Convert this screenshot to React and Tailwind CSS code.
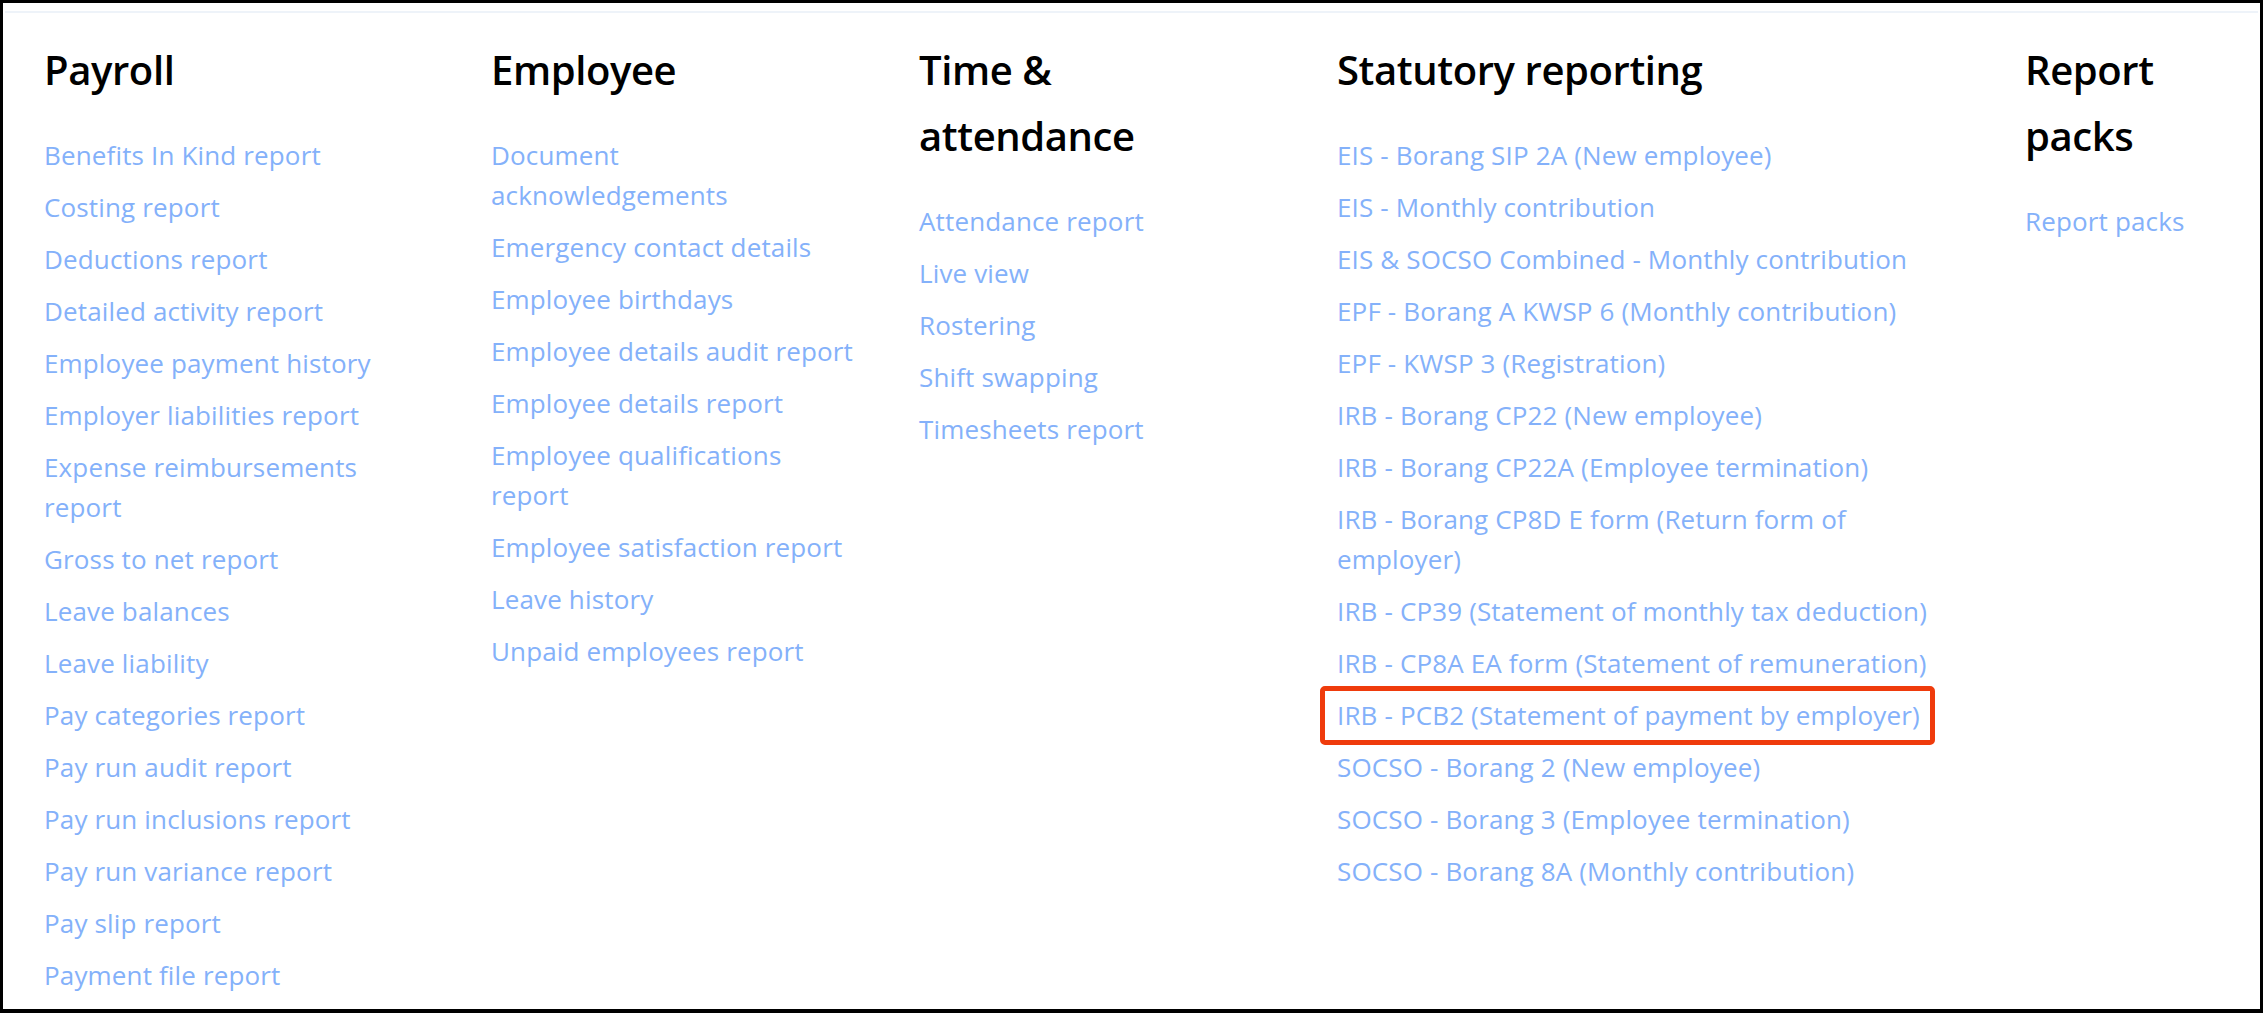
const COLUMNS = [
  {
    title: 'Payroll',
    width: 'w-[447px] pr-[60px]',
    links: [
      'Benefits In Kind report',
      'Costing report',
      'Deductions report',
      'Detailed activity report',
      'Employee payment history',
      'Employer liabilities report',
      'Expense reimbursements report',
      'Gross to net report',
      'Leave balances',
      'Leave liability',
      'Pay categories report',
      'Pay run audit report',
      'Pay run inclusions report',
      'Pay run variance report',
      'Pay slip report',
      'Payment file report',
    ],
  },
  {
    title: 'Employee',
    width: 'w-[428px] pr-[60px]',
    links: [
      'Document acknowledgements',
      'Emergency contact details',
      'Employee birthdays',
      'Employee details audit report',
      'Employee details report',
      'Employee qualifications report',
      'Employee satisfaction report',
      'Leave history',
      'Unpaid employees report',
    ],
  },
  {
    title: 'Time & attendance',
    width: 'w-[418px] pr-[100px]',
    links: ['Attendance report', 'Live view', 'Rostering', 'Shift swapping', 'Timesheets report'],
  },
  {
    title: 'Statutory reporting',
    width: 'w-[688px] pr-[60px]',
    links: [
      'EIS - Borang SIP 2A (New employee)',
      'EIS - Monthly contribution',
      'EIS & SOCSO Combined - Monthly contribution',
      'EPF - Borang A KWSP 6 (Monthly contribution)',
      'EPF - KWSP 3 (Registration)',
      'IRB - Borang CP22 (New employee)',
      'IRB - Borang CP22A (Employee termination)',
      'IRB - Borang CP8D E form (Return form of employer)',
      'IRB - CP39 (Statement of monthly tax deduction)',
      'IRB - CP8A EA form (Statement of remuneration)',
      'IRB - PCB2 (Statement of payment by employer)',
      'SOCSO - Borang 2 (New employee)',
      'SOCSO - Borang 3 (Employee termination)',
      'SOCSO - Borang 8A (Monthly contribution)',
    ],
  },
  {
    title: 'Report packs',
    width: 'w-[200px]',
    links: ['Report packs'],
  },
]

// the one report that is called out with a red frame
const HIGHLIGHT = 'IRB - PCB2 (Statement of payment by employer)'

function ReportColumn({ title, width, links }) {
  return (
    <section className={`shrink-0 ${width}`}>
      <h2 className="mb-8 text-[40px] font-semibold leading-[66px] tracking-[-0.4px] text-black">
        {title}
      </h2>
      <ul className="flex flex-col gap-3">
        {links.map((label) => (
          <li key={label} className="text-[26px] leading-[40px] tracking-[0.15px] text-[#84b1fa]">
            {label === HIGHLIGHT ? (
              <a href="#" className="relative inline-block">
                {label}
                <span className="pointer-events-none absolute -top-[9px] -bottom-[10px] -left-[17px] -right-[15px] rounded-[5px] border-[5px] border-[#ef3b0c]" />
              </a>
            ) : (
              <a href="#">{label}</a>
            )}
          </li>
        ))}
      </ul>
    </section>
  )
}

export default function App() {
  return (
    <div
      className="h-[1013px] overflow-hidden bg-black pt-[3px] pr-[3px] pb-[4px] pl-[3px]"
      style={{ fontFamily: '"Open Sans", "Liberation Sans", sans-serif' }}
    >
      <div className="h-full bg-white px-[2px] pt-[8px]">
        <div className="flex border-t-2 border-[#eef3f9] pt-[24px] pl-[39px]">
          {COLUMNS.map((col) => (
            <ReportColumn key={col.title} {...col} />
          ))}
        </div>
      </div>
    </div>
  )
}
